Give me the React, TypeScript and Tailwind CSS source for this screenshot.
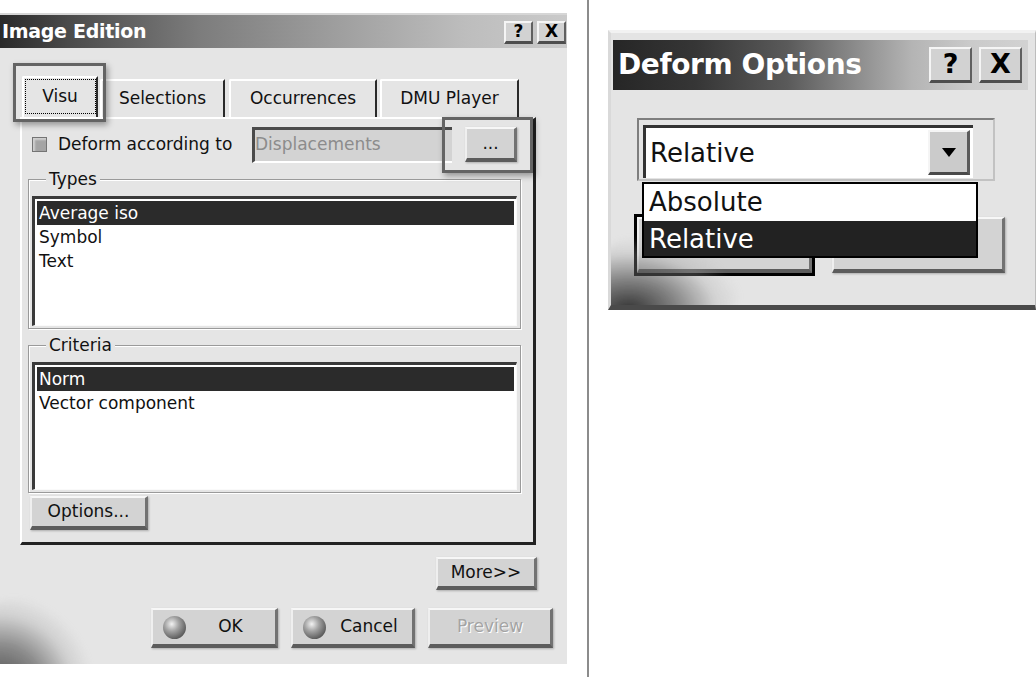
import React from "react";

const raised =
  "bg-[#d3d3d3] border-t-2 border-l-2 border-t-[#f7f7f7] border-l-[#efefef] border-r-[3px] border-b-[4px] border-r-[#727272] border-b-[#5c5c5c] shadow-[1px_1px_2px_rgba(0,0,0,0.25)]";

function Ball() {
  return (
    <span className="w-[23px] h-[23px] shrink-0 rounded-full bg-[radial-gradient(circle_at_38%_35%,#f2f2f2_0%,#a2a2a2_35%,#5a5a5a_75%,#3a3a3a_100%)]" />
  );
}

function Btn({
  label,
  ball,
  disabled,
  className,
}: {
  label: string;
  ball?: boolean;
  disabled?: boolean;
  className: string;
}) {
  return (
    <div className={`${raised} shrink-0 flex items-center text-[17px] ${className}`}>
      {ball && (
        <span className="pl-[10px] flex">
          <Ball />
        </span>
      )}
      <span
        className={`flex-1 text-center ${
          disabled ? "text-[#a4a4a4] [text-shadow:1px_1px_0_#fff]" : "text-[#111]"
        }`}
      >
        {label}
      </span>
    </div>
  );
}

function TitleBtn({ label, big }: { label: string; big?: boolean }) {
  return (
    <div
      className={`flex items-center justify-center font-bold text-black bg-[#d2d2d2] border-t-2 border-l-2 border-t-[#f5f5f5] border-l-[#f5f5f5] border-r-2 border-b-[3px] border-r-[#606060] border-b-[#4e4e4e] ${
        big ? "w-[43px] h-[36px] text-[27px]" : "w-[29px] h-[23px] text-[17px]"
      }`}
    >
      {label}
    </div>
  );
}

function ListBox({
  items,
  selected,
  className,
}: {
  items: string[];
  selected: number;
  className: string;
}) {
  return (
    <div
      className={`bg-white border-t-[3px] border-l-[3px] border-t-[#3a3a3a] border-l-[#3a3a3a] border-r border-b border-r-[#fafafa] border-b-[#fafafa] pt-[2px] px-[2px] text-[17px] leading-[24px] ${className}`}
    >
      {items.map((it, i) => (
        <div
          key={it}
          className={`pl-[2px] h-[24px] ${i === selected ? "bg-[#2b2b2b] text-white" : "text-[#111]"}`}
        >
          {it}
        </div>
      ))}
    </div>
  );
}

function Group({ title, children }: { title: string; children: React.ReactNode }) {
  return (
    <fieldset className="ml-[6px] w-[493px] border border-[#9a9a9a] shadow-[inset_1px_1px_0_#fff,1px_1px_0_#fff] px-[3px] pb-[2px] pt-[7px] min-w-0">
      <legend className="ml-[14px] px-[3px] text-[17px] leading-[20px] text-[#111] bg-[#e5e5e5]">
        {title}
      </legend>
      {children}
    </fieldset>
  );
}

function Tab({ label, active, className }: { label: string; active?: boolean; className: string }) {
  return (
    <div
      className={`flex items-center justify-center text-[17px] text-[#111] border-t-2 border-l-2 border-t-white border-l-white border-r-2 border-r-[#2a2a2a] rounded-tl-[2px] ${className}`}
    >
      {active ? (
        <div className="w-[71px] h-[35px] mb-[2px] border border-dotted border-black flex items-center justify-center">
          {label}
        </div>
      ) : (
        label
      )}
    </div>
  );
}

function ImageEdition() {
  return (
    <div className="relative w-[567px] h-[651px] bg-[#e5e5e5] border-t-2 border-t-[#d6d6d6] flex flex-col overflow-hidden">
      <div className="h-[33px] shrink-0 flex items-center justify-between pl-[2px] pr-[1px] bg-[linear-gradient(90deg,#2a2a2a_0%,#4a4a4a_12%,#7c7c7c_35%,#a2a2a2_62%,#bdbdbd_82%,#cacaca_100%)]">
        <span className="text-white font-bold text-[19px] tracking-[-0.3px]">Image Edition</span>
        <div className="flex gap-[4px] mt-[2px]">
          <TitleBtn label="?" />
          <TitleBtn label="X" />
        </div>
      </div>

      <div className="flex flex-col pl-[20px] pr-[31px]">
        <div className="flex items-end h-[69px] pl-[2px]">
          <Tab label="Visu" active className="w-[76px] h-[41px]" />
          <Tab label="Selections" className="ml-[2px] w-[125px] h-[38px]" />
          <Tab label="Occurrences" className="ml-[4px] w-[148px] h-[38px]" />
          <Tab label="DMU Player" className="ml-[3px] w-[139px] h-[38px]" />
        </div>

        <div className="h-[428px] border-t-2 border-l-2 border-t-white border-l-white border-r-[3px] border-b-[3px] border-r-[#222] border-b-[#222] flex flex-col">
          <div className="flex items-center h-[37px] shrink-0 mt-[7px] pl-[10px]">
            <span className="w-[15px] h-[15px] shrink-0 bg-[#a4a4a4] border border-[#747474] shadow-[inset_2px_2px_2px_#d0d0d0]" />
            <span className="w-[205px] pl-[11px] text-[17px] text-[#111] whitespace-nowrap">
              Deform according to
            </span>
            <div className="w-[200px] h-[36px] bg-[#d3d3d3] border-t-[3px] border-l-[3px] border-t-[#4a4a4a] border-l-[#4a4a4a] border-b-2 border-b-white flex items-center text-[17px] text-[#8c8c8c]">
              Displacements
            </div>
            <Btn label="..." className="ml-[13px] w-[52px] h-[35px]" />
          </div>

          <div className="mt-[6px] shrink-0">
            <Group title="Types">
              <ListBox items={["Average iso", "Symbol", "Text"]} selected={0} className="h-[130px]" />
            </Group>
          </div>
          <div className="mt-[6px] shrink-0">
            <Group title="Criteria">
              <ListBox items={["Norm", "Vector component"]} selected={0} className="h-[128px]" />
            </Group>
          </div>
          <Btn label="Options..." className="mt-[3px] ml-[8px] w-[118px] h-[34px]" />
        </div>
      </div>

      <div className="flex justify-end pr-[30px] mt-[12px]">
        <Btn label="More>>" className="w-[101px] h-[33px]" />
      </div>
      <div className="flex justify-end gap-[13px] pr-[14px] mt-[18px]">
        <Btn label="OK" ball className="w-[127px] h-[40px]" />
        <Btn label="Cancel" ball className="w-[124px] h-[40px]" />
        <Btn label="Preview" disabled className="w-[125px] h-[40px]" />
      </div>

      {/* blurred logo watermark, bottom left */}
      <div className="absolute left-[-40px] bottom-[-50px] w-[130px] h-[115px] rounded-full blur-[3px] bg-[radial-gradient(ellipse_at_30%_80%,rgba(40,40,40,0.85)_0%,rgba(90,90,90,0.65)_35%,rgba(170,170,170,0.35)_58%,rgba(229,229,229,0)_74%)]" />

      {/* highlight boxes */}
      <div className="absolute left-[13px] top-[48px] w-[93px] h-[59px] border-[3px] border-[#646464] shadow-[2px_3px_6px_rgba(0,0,0,0.35)]" />
      <div className="absolute left-[442px] top-[102px] w-[91px] h-[56px] border-[3px] border-[#646464] shadow-[2px_3px_6px_rgba(0,0,0,0.35)]" />
    </div>
  );
}

function DeformOptions() {
  return (
    <div className="relative w-[428px] h-[280px] bg-[#e4e4e4] border-t-[3px] border-t-[#f2f2f2] border-l-[3px] border-l-[#d9d9d9] border-r border-r-[#bdbdbd] border-b-[5px] border-b-[#4a4a4a] pt-[7px] pl-[2px] pr-[7px] overflow-hidden">
      <div className="h-[50px] flex items-center justify-between pl-[5px] pr-[6px] bg-[linear-gradient(90deg,#262626_0%,#363636_20%,#5a5a5a_42%,#8a8a8a_58%,#b4b4b4_72%,#cacaca_86%,#d2d2d2_100%)]">
        <span className="text-white font-bold text-[28px] tracking-[-0.4px]">Deform Options</span>
        <div className="flex gap-[7px]">
          <TitleBtn label="?" big />
          <TitleBtn label="X" big />
        </div>
      </div>

      <div className="mt-[28px] ml-[24px] w-[358px] h-[63px] border-t-2 border-l-2 border-t-[#7e7e7e] border-l-[#7e7e7e] border-r-2 border-b-2 border-r-[#c2c2c2] border-b-[#c2c2c2] pt-[5px] pl-[4px]">
        <div className="w-[330px] h-[53px] bg-white border-t-[3px] border-l-[3px] border-t-[#333] border-l-[#333] flex items-start">
          <span className="flex-1 pl-[4px] text-[26px] leading-[50px] text-[#111]">Relative</span>
          <div className="mt-[2px] mr-[3px] w-[42px] h-[45px] bg-[#cbcbcb] border-t-2 border-l-2 border-t-[#f5f5f5] border-l-[#f5f5f5] border-r-[3px] border-b-[3px] border-r-[#5a5a5a] border-b-[#4a4a4a] flex items-center justify-center">
            <svg width="14" height="9" viewBox="0 0 14 9">
              <path d="M0 0 H14 L7 9 Z" fill="#000" />
            </svg>
          </div>
        </div>
      </div>

      <div className="mt-[36px] ml-[24px] flex gap-[20px]">
        <div className={`${raised} w-[175px] h-[56px] outline-[3px] outline-black`} />
        <div className={`${raised} w-[173px] h-[56px]`} />
      </div>

      {/* blurred logo watermark */}
      <div className="absolute left-[-20px] top-[205px] w-[150px] h-[90px] rounded-full blur-[3px] bg-[radial-gradient(ellipse_at_25%_80%,rgba(30,30,30,0.9)_0%,rgba(80,80,80,0.65)_30%,rgba(170,170,170,0.3)_55%,rgba(228,228,228,0)_72%)]" />

      {/* open dropdown list */}
      <div className="absolute left-[31px] top-[149px] w-[336px] h-[76px] border-2 border-black bg-white text-[26px] leading-[36px]">
        <div className="pl-[5px] h-[37px] text-[#111]">Absolute</div>
        <div className="pl-[5px] h-[35px] bg-[#222] text-white">Relative</div>
      </div>
    </div>
  );
}

export default function App() {
  return (
    <div className="w-[1036px] h-[677px] bg-white flex overflow-hidden font-['DejaVu_Sans',sans-serif]">
      <div className="w-[568px] shrink-0 pt-[13px]">
        <ImageEdition />
      </div>
      <div className="w-[19px] shrink-0" />
      <div className="w-[2px] shrink-0 bg-[#8c8c8c]" />
      <div className="w-[19px] shrink-0" />
      <div className="shrink-0 pt-[30px]">
        <DeformOptions />
      </div>
    </div>
  );
}
